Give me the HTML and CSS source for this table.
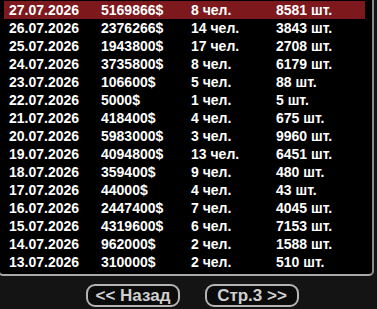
FILE: index.html
```html
<!DOCTYPE html>
<html>
<head>
<meta charset="utf-8">
<link rel="stylesheet" href="styles.css">
</head>
<body>
<div class="list">
  <div class="rows">
    <div class="row active"><span>27.07.2026</span><span>5169866$</span><span>8 чел.</span><span>8581 шт.</span></div>
    <div class="row"><span>26.07.2026</span><span>2376266$</span><span>14 чел.</span><span>3843 шт.</span></div>
    <div class="row"><span>25.07.2026</span><span>1943800$</span><span>17 чел.</span><span>2708 шт.</span></div>
    <div class="row"><span>24.07.2026</span><span>3735800$</span><span>8 чел.</span><span>6179 шт.</span></div>
    <div class="row"><span>23.07.2026</span><span>106600$</span><span>5 чел.</span><span>88 шт.</span></div>
    <div class="row"><span>22.07.2026</span><span>5000$</span><span>1 чел.</span><span>5 шт.</span></div>
    <div class="row"><span>21.07.2026</span><span>418400$</span><span>4 чел.</span><span>675 шт.</span></div>
    <div class="row"><span>20.07.2026</span><span>5983000$</span><span>3 чел.</span><span>9960 шт.</span></div>
    <div class="row"><span>19.07.2026</span><span>4094800$</span><span>13 чел.</span><span>6451 шт.</span></div>
    <div class="row"><span>18.07.2026</span><span>359400$</span><span>9 чел.</span><span>480 шт.</span></div>
    <div class="row"><span>17.07.2026</span><span>44000$</span><span>4 чел.</span><span>43 шт.</span></div>
    <div class="row"><span>16.07.2026</span><span>2447400$</span><span>7 чел.</span><span>4045 шт.</span></div>
    <div class="row"><span>15.07.2026</span><span>4319600$</span><span>6 чел.</span><span>7153 шт.</span></div>
    <div class="row"><span>14.07.2026</span><span>962000$</span><span>2 чел.</span><span>1588 шт.</span></div>
    <div class="row"><span>13.07.2026</span><span>310000$</span><span>2 чел.</span><span>510 шт.</span></div>
  </div>
</div>
<div class="nav">
  <button class="btn">&lt;&lt; Назад</button>
  <button class="btn">Стр.3 &gt;&gt;</button>
</div>
</body>
</html>
```
FILE: styles.css
```css
html, body {
  margin: 0;
  padding: 0;
  background: #141414;
  overflow: hidden;
}
body {
  width: 377px;
  height: 309px;
  font-family: "Liberation Sans", Arial, sans-serif;
}
.list {
  box-sizing: border-box;
  width: 376px;
  height: 276px;
  margin-left: -2px;
  background: #000;
  border-left: 2px solid #9a9a9a;
  border-right: 2px solid #8c8c8c;
  border-bottom: 2px solid #a8a8a8;
  border-bottom-left-radius: 5px;
  border-bottom-right-radius: 5px;
  padding: 1px 0 0 4px;
}
.rows {
  width: 361px;
}
.row {
  display: grid;
  grid-template-columns: 92px 90px 85px 1fr;
  height: 18px;
  align-items: center;
  padding-left: 5px;
  color: #fff;
  font-weight: bold;
  font-size: 14px;
  line-height: 18px;
  white-space: nowrap;
}
.row.active {
  background: #7d191d;
}
.nav {
  display: flex;
  gap: 25px;
  padding: 8px 0 0 86px;
}
.btn {
  box-sizing: border-box;
  width: 94px;
  height: 23px;
  border: 2px solid #b4b4b4;
  border-radius: 9px;
  background: #0b0b0b;
  color: #cfcfcf;
  font-family: "Liberation Sans", Arial, sans-serif;
  font-weight: bold;
  font-size: 17px;
  padding: 0;
  line-height: 19px;
  white-space: nowrap;
}
```
